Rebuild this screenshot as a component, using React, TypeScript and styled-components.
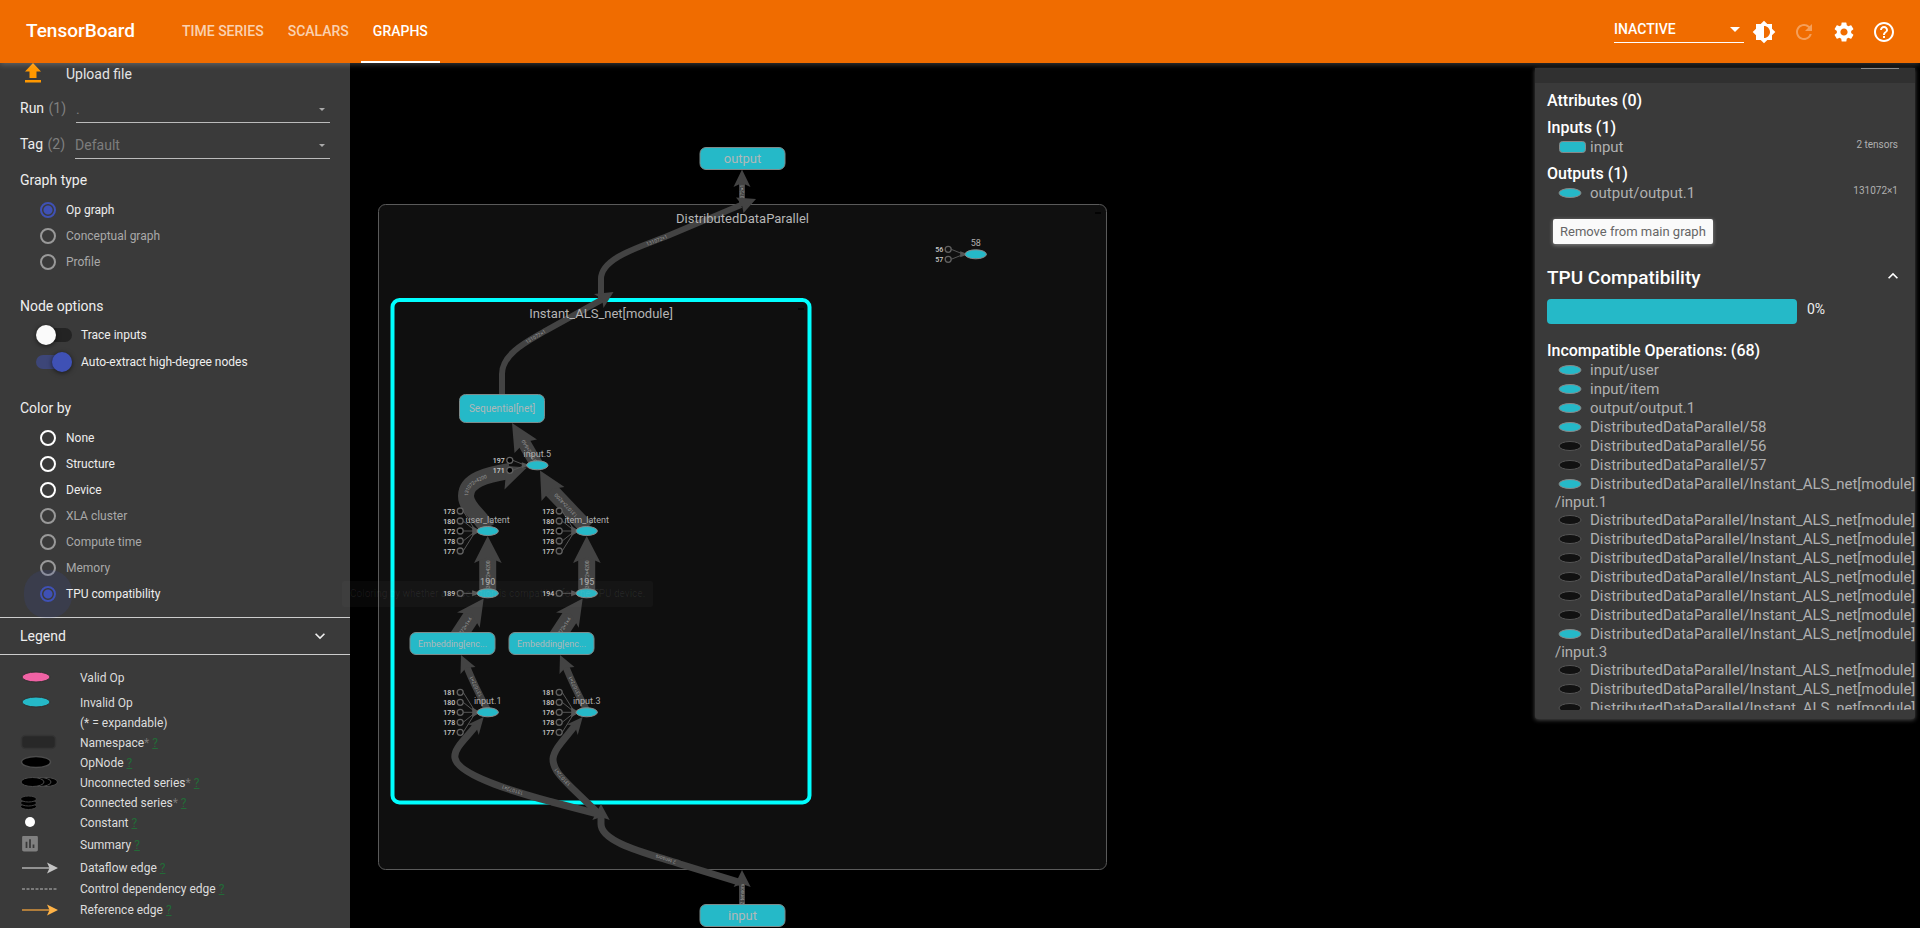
import React from "react";
import styled, { createGlobalStyle } from "styled-components";
import {
  MdBrightness6,
  MdRefresh,
  MdSettings,
  MdHelpOutline,
  MdExpandMore,
  MdExpandLess,
  MdInsertChart,
} from "react-icons/md";

const CYAN = "#25b9c8";
const SANS = 'Roboto, "Liberation Sans", sans-serif';

const GlobalStyle = createGlobalStyle`
  *, *::before, *::after { box-sizing: border-box; }
  html, body, #root { height: 100%; }
  body { margin: 0; background: #000; color: #fff; font-family: ${SANS}; overflow: hidden; }
  button, select, input { font-family: inherit; }
`;

const Page = styled.div`
  display: flex;
  flex-direction: column;
  height: 100vh;
`;

/* ---------- header ---------- */

const Header = styled.header`
  position: relative;
  z-index: 3;
  display: flex;
  align-items: stretch;
  flex: none;
  height: 63px;
  padding: 0 24px 0 26px;
  background: #f06c00;
  box-shadow: 0 1px 6px rgba(255, 255, 255, 0.25);
`;

const Brand = styled.h1`
  margin: 0 35px 0 0;
  font-size: 19px;
  font-weight: 500;
  line-height: 62px;
`;

const Tabs = styled.nav`
  display: flex;
  flex: 1;
`;

const Tab = styled.a<{ $active?: boolean }>`
  padding: 0 12px;
  border-bottom: 2px solid ${(p) => (p.$active ? "#fff" : "transparent")};
  color: ${(p) => (p.$active ? "#fff" : "rgba(255, 255, 255, 0.7)")};
  font-size: 14px;
  font-weight: 500;
  line-height: 62px;
  text-decoration: none;
`;

const HeaderTools = styled.div`
  display: flex;
  align-items: center;
  gap: 16px;
`;

const PluginPicker = styled.div`
  display: flex;
  align-items: center;
  width: 130px;
  height: 28px;
  margin: 0 -8px 6px 0;
  padding: 2px 4px 0 0;
  border-bottom: 1px solid #fff;
`;

const PluginSelect = styled.select`
  flex: 1;
  padding: 0;
  border: 0;
  background: transparent;
  color: #fff;
  font-size: 14px;
  font-weight: 500;
  appearance: none;
  outline: none;
`;

const IconButton = styled.button`
  display: flex;
  width: 24px;
  height: 24px;
  padding: 0;
  border: 0;
  background: transparent;
  color: #fff;
  &:disabled { color: rgba(255, 255, 255, 0.35); }
`;

/* ---------- body ---------- */

const Body = styled.div`
  display: flex;
  flex: 1;
  min-height: 0;
`;

const Sidebar = styled.aside`
  flex: none;
  width: 350px;
  overflow: hidden;
  background: #3a3a3a;
`;

const Controls = styled.form`
  padding: 0 20px 10px;
`;

const UploadButton = styled.button`
  display: flex;
  align-items: center;
  gap: 20px;
  height: 22px;
  margin-bottom: 2px;
  padding: 0;
  border: 0;
  background: transparent;
  color: #e4e4e4;
  font-size: 14px;
`;

const SelectRow = styled.div`
  display: flex;
  align-items: flex-end;
  height: 36px;
  gap: 10px;
`;

const SelectLabel = styled.label`
  padding-bottom: 5px;
  color: #eee;
  font-size: 14px;
  line-height: 20px;
  span { margin-left: 1px; color: #808080; }
`;

const SelectBox = styled.div`
  display: flex;
  flex: 1;
  align-items: center;
  height: 29px;
  padding: 2px 5px 0 0;
  border-bottom: 1px solid #bbb;
`;

const PlainSelect = styled.select`
  flex: 1;
  padding: 0;
  border: 0;
  background: transparent;
  color: #7d7d7d;
  font-size: 14px;
  appearance: none;
  outline: none;
`;

const Group = styled.fieldset<{ $gap: number }>`
  min-width: 0;
  margin: ${(p) => p.$gap}px 0 0;
  padding: 0;
  border: 0;
`;

const GroupTitle = styled.legend<{ $tight?: boolean }>`
  padding: 0 0 ${(p) => (p.$tight ? 5 : 7)}px;
  color: #eee;
  font-size: 14px;
  line-height: 20px;
`;

const RadioLabel = styled.label<{ $off?: boolean }>`
  display: flex;
  align-items: center;
  gap: 10px;
  height: 26px;
  padding-left: 20px;
  color: ${(p) => (p.$off ? "#a9a9a9" : "#eee")};
  font-size: 12px;
`;

const Radio = styled.input<{ $ripple?: boolean }>`
  width: 16px;
  height: 16px;
  margin: 0;
  border: 2px solid #fff;
  border-radius: 50%;
  appearance: none;
  &:disabled { border-color: #999; }
  &:checked {
    border-color: #3f51b5;
    background: radial-gradient(circle, #3f51b5 4px, transparent 5px);
    box-shadow: ${(p) => (p.$ripple ? "0 0 0 16px rgba(63, 81, 181, 0.15)" : "none")};
  }
`;

const SwitchLabel = styled.label`
  display: flex;
  align-items: center;
  gap: 9px;
  height: 27px;
  padding-left: 16px;
  color: #eee;
  font-size: 12px;
`;

const Switch = styled.input`
  display: flex;
  align-items: center;
  width: 36px;
  height: 14px;
  margin: 0;
  border-radius: 7px;
  background: #232323;
  appearance: none;
  &::before {
    content: "";
    width: 20px;
    height: 20px;
    border-radius: 50%;
    background: #fafafa;
    box-shadow: 0 1px 5px rgba(0, 0, 0, 0.6);
  }
  &:checked { justify-content: flex-end; background: #3d4678; }
  &:checked::before { background: #3f51b5; }
`;

const LegendHeader = styled.button`
  display: flex;
  align-items: center;
  justify-content: space-between;
  width: 100%;
  height: 38px;
  padding: 0 20px;
  border: solid #ccc;
  border-width: 1px 0;
  background: transparent;
  color: #eee;
  font-size: 14px;
`;

const LegendList = styled.ul`
  margin: 0;
  padding: 13px 20px 0;
  list-style: none;
`;

const LegendRow = styled.li<{ $h: number }>`
  display: flex;
  align-items: center;
  height: ${(p) => p.$h}px;
  color: #ddd;
  font-size: 12px;
  line-height: 20px;
  &:first-child { margin-bottom: 5px; }
`;

const LegendGlyph = styled.span`
  display: flex;
  flex: none;
  width: 60px;
  height: 18px;
`;

const Star = styled.span`
  color: #777;
`;

const Hint = styled.a`
  margin-left: 3px;
  color: #236b37;
`;

/* ---------- graph ---------- */

const Canvas = styled.main`
  position: relative;
  flex: 1;
  min-width: 0;
`;

const GraphSvg = styled.svg`
  display: block;
  width: 100%;
  height: 100%;
  font-family: ${SANS};
`;

const Tooltip = styled.div`
  position: absolute;
  top: 518px;
  left: -8px;
  padding: 0 8px;
  border-radius: 2px;
  background: rgba(140, 140, 140, 0.05);
  color: rgba(255, 255, 255, 0.07);
  font-size: 10px;
  line-height: 26px;
`;

/* ---------- info card ---------- */

const Card = styled.section`
  position: absolute;
  top: 5px;
  right: 5px;
  width: 380px;
  overflow: hidden;
  padding-bottom: 9px;
  border-radius: 0 0 3px 3px;
  background: #3a3a3a;
  box-shadow: 0 1px 4px rgba(255, 255, 255, 0.3);
`;

const CardTop = styled.div`
  display: flex;
  justify-content: flex-end;
  height: 15px;
  padding-right: 16px;
  background: #303030;
  &::after {
    content: "";
    width: 38px;
    height: 1px;
    background: #8a8a8a;
  }
`;

const CardBody = styled.div`
  padding: 7px 0 0 12px;
`;

const Heading = styled.h3<{ $gap?: number }>`
  margin: ${(p) => p.$gap ?? 0}px 0 0;
  font-size: 16px;
  font-weight: 500;
  line-height: 21px;
`;

const Ops = styled.ul`
  margin: 0;
  padding: 0 0 0 8px;
  list-style: none;
`;

const ClippedOps = styled(Ops)`
  height: 349px;
  overflow: hidden;
`;

const Op = styled.li`
  min-height: 19px;
  color: #b0b0b0;
  font-size: 15px;
  line-height: 18px;
  white-space: nowrap;
`;

const OpFlex = styled(Op)`
  display: flex;
  justify-content: space-between;
  padding-right: 17px;
  small { margin-top: -2px; font-size: 10px; }
`;

const OpIcon = styled.svg`
  display: inline-block;
  width: 35px;
  height: 14px;
  vertical-align: -2px;
`;

const RemoveButton = styled.button`
  display: block;
  height: 25px;
  margin: 16px 0 0 6px;
  padding: 0 7px;
  border: 0;
  border-radius: 2px;
  background: #fafafa;
  box-shadow: 0 1px 4px rgba(255, 255, 255, 0.4);
  color: #666;
  font-size: 13px;
`;

const SectionHead = styled.div`
  display: flex;
  align-items: center;
  justify-content: space-between;
  margin-top: 20px;
  padding-right: 12px;
  h2 { margin: 0; font-size: 19px; font-weight: 500; line-height: 28px; }
`;

const Meter = styled.div`
  display: flex;
  gap: 10px;
  margin-top: 7px;
  color: #eee;
  font-size: 14px;
  line-height: 20px;
`;

const MeterBar = styled.div`
  width: 250px;
  height: 25px;
  border-radius: 4px;
  background: ${CYAN};
`;

const Collapse = styled(IconButton)`
  width: 20px;
  height: 20px;
  margin-top: -4px;
`;

/* ---------- data ---------- */

const colorOptions = [
  { label: "None" },
  { label: "Structure" },
  { label: "Device" },
  { label: "XLA cluster", off: true },
  { label: "Compute time", off: true },
  { label: "Memory", off: true },
];

const M = "DistributedDataParallel/Instant_ALS_net[module]";
const ops: { name: string; on?: boolean; rest?: string }[] = [
  { name: "input/user", on: true },
  { name: "input/item", on: true },
  { name: "output/output.1", on: true },
  { name: "DistributedDataParallel/58", on: true },
  { name: "DistributedDataParallel/56" },
  { name: "DistributedDataParallel/57" },
  { name: M, on: true, rest: "/input.1" },
  ...Array.from({ length: 6 }, () => ({ name: M })),
  { name: M, on: true, rest: "/input.3" },
  ...Array.from({ length: 3 }, () => ({ name: M })),
];

const EllipseIcon = ({ on }: { on?: boolean }) => (
  <OpIcon aria-hidden="true">
    <ellipse cx="15" cy="7" rx="11" ry="4.5" fill={on ? CYAN : "#111"} stroke={on ? "#888" : "#555"} />
  </OpIcon>
);

const Caret = ({ w, color }: { w: number; color: string }) => (
  <svg width={w} height={w / 2} viewBox="0 0 10 5" aria-hidden="true">
    <path d="M0 0h10L5 5z" fill={color} />
  </svg>
);

const legend: { h: number; label: string; star?: boolean; hint?: boolean; glyph?: React.ReactNode }[] = [
  { h: 20, label: "Valid Op", glyph: <ellipse cx="16" cy="8" rx="14" ry="5" fill="#f062a4" stroke="#2e2e2e" /> },
  { h: 20, label: "Invalid Op", glyph: <ellipse cx="16" cy="8" rx="14" ry="5" fill={CYAN} stroke="#2e2e2e" /> },
  { h: 20, label: "(* = expandable)" },
  {
    h: 20, label: "Namespace", star: true, hint: true,
    glyph: <rect x="1.5" y="1.5" width="34" height="13" rx="4" fill="#282828" stroke="#343434" strokeWidth="1.5" />,
  },
  {
    h: 20, label: "OpNode", hint: true,
    glyph: <ellipse cx="16" cy="8" rx="14.5" ry="5.5" fill="#000" stroke="#4c4c4c" strokeWidth="1.5" />,
  },
  {
    h: 20, label: "Unconnected series", star: true, hint: true,
    glyph: (
      <g fill="#000" stroke="#4c4c4c">
        <ellipse cx="26" cy="8" rx="11.5" ry="4.5" />
        <ellipse cx="19.5" cy="8" rx="11.5" ry="4.5" />
        <ellipse cx="12.5" cy="8" rx="11.5" ry="4.5" />
      </g>
    ),
  },
  {
    h: 20, label: "Connected series", star: true, hint: true,
    glyph: (
      <g fill="#000" stroke="#444">
        <ellipse cx="8.5" cy="12.5" rx="8" ry="3" />
        <ellipse cx="8.5" cy="9" rx="8" ry="3" />
        <ellipse cx="8.5" cy="5" rx="8" ry="3" />
      </g>
    ),
  },
  { h: 20, label: "Constant", hint: true, glyph: <circle cx="10" cy="8" r="5" fill="#fff" /> },
  { h: 24, label: "Summary", hint: true, glyph: <MdInsertChart size={21} x="-0.5" y="-3" color="#808080" /> },
  {
    h: 21, label: "Dataflow edge", hint: true,
    glyph: (
      <g>
        <path d="M2 9H30" stroke="#b0b0b0" strokeWidth="1.5" />
        <path d="M38 9L27 3.500L29.500 9L27 14.500z" fill="#c4c4c4" />
      </g>
    ),
  },
  {
    h: 21, label: "Control dependency edge", hint: true,
    glyph: <path d="M2 9H38" stroke="#bbb" strokeDasharray="3 1.500" />,
  },
  {
    h: 21, label: "Reference edge", hint: true,
    glyph: (
      <g>
        <path d="M2 9H30" stroke="#d8953c" strokeWidth="1.5" />
        <path d="M38 9L27 3.500L29.500 9L27 14.500z" fill="#ffb347" />
      </g>
    ),
  },
];

type EdgeData = { id: string; d: string; w: number; head: string; label?: string; at?: string };

const innerEdges: EdgeData[] = [
  { id: "seq", d: "M537 465L523 441", w: 13, head: "512,423 537,439.500 525,442 514.500,453", label: "131072×640", at: "52%" },
  { id: "user", d: "M487 528C480 515 466 508 466 496C466 480 486 475 510 471", w: 16, head: "527,467.500 497,465 506,472 504.500,489.500", label: "131072×4200", at: "58%" },
  { id: "item", d: "M587 528L549 488", w: 15, head: "540,470.500 564.500,487 552,489 541.500,501", label: "131072×4200", at: "56%" },
  { id: "i1", d: "M488 711C482 700 475 687 466 665", w: 7, head: "461,655 475.500,667 466,668 460.500,674", label: "131072×1", at: "54%" },
  { id: "i3", d: "M587 711C581 700 574 687 565 665", w: 7, head: "560,655 574.500,667 565,668 559.500,674", label: "131072×1", at: "54%" },
  { id: "n190", d: "M487.700 594V556", w: 17, head: "487.700,536 501.700,563 487.700,557 474,563", label: "131072×4200", at: "48%" },
  { id: "n195", d: "M586.700 594V556", w: 17, head: "586.700,536 600.700,563 586.700,557 573,563", label: "131072×4200", at: "48%" },
  { id: "e1", d: "M452 646L473 614", w: 17, head: "483.700,598.500 457,612.500 472,614 479.700,627.700", label: "131072×1×4", at: "52%" },
  { id: "e3", d: "M551 646L572 614", w: 17, head: "582.700,598.500 556,612.500 571,614 578.700,627.700", label: "131072×1×4", at: "52%" },
  { id: "in1", d: "M598 814L552 802C530 796 458 777 455 758C453 748 468 737 477 724", w: 7, head: "483.700,717 467.700,724.500 476,726 478.700,735", label: "131072×1", at: "45%" },
  { id: "in3", d: "M599 814L572 788C560 776 553 769 553 759C554 748 567 737 576 724", w: 7, head: "582.700,717 566.700,724.500 575,726 577.700,735", label: "131072×1", at: "45%" },
  { id: "sq", d: "M502 396V374C502 353 530 340 545 331L603 299", w: 6, head: "613.500,292 594,294 602,299 603.500,308", label: "131072×1", at: "49%" },
];

const outerEdges: EdgeData[] = [
  { id: "dd", d: "M601 299V279C601 258 640 247 665 237L741 205", w: 6, head: "756,199 736,197.500 742,205 743.500,213", label: "131072×1", at: "50%" },
  { id: "bot", d: "M742 883L680 864C650 854 601 843 601 824V814", w: 7, head: "601,804 609.700,820 601,817 592.300,820", label: "2 tensors", at: "48%" },
];

const rootEdges: EdgeData[] = [
  { id: "out", d: "M742 206V182", w: 6, head: "742,169.500 750.500,187 742,183 733.500,187", label: "072×1", at: "60%" },
  { id: "inp", d: "M742 906V882", w: 6, head: "742,870 750.700,887 742,884 733.700,887", label: "2 tensors", at: "50%" },
];

const Edge = ({ id, d, w, head, label, at }: EdgeData) => (
  <g>
    <path id={"edge-" + id} d={d} fill="none" stroke="#434343" strokeWidth={w} />
    <polygon points={head} fill="#434343" />
    {label && (
      <text fontSize="5" fill="#999" dy="2" textAnchor="middle">
        <textPath href={"#edge-" + id} startOffset={at}>{label}</textPath>
      </text>
    )}
  </g>
);

type Const = [string, number, boolean?];
type OpData = { x: number; y: number; label: string; consts: Const[] };

const latentConsts: Const[] = [["173", -20], ["180", -10], ["172", 0, true], ["178", 10], ["177", 20]];

const opNodes: OpData[] = [
  { x: 537.3, y: 465.3, label: "input.5", consts: [["197", -5, true], ["171", 5, true]] },
  { x: 487.7, y: 531, label: "user_latent", consts: latentConsts },
  { x: 586.7, y: 531, label: "item_latent", consts: latentConsts },
  { x: 487.7, y: 593.3, label: "190", consts: [["189", 0]] },
  { x: 586.7, y: 593.3, label: "195", consts: [["194", 0]] },
  { x: 487.7, y: 712.3, label: "input.1", consts: [["181", -20], ["180", -10], ["179", 0], ["178", 10], ["177", 20]] },
  { x: 586.7, y: 712.3, label: "input.3", consts: [["181", -20], ["180", -10], ["176", 0], ["178", 10], ["177", 20]] },
  { x: 975.7, y: 254.3, label: "58", consts: [["56", -5], ["57", 5]] },
];

const CONST_DX = 27.5;

const OpNode = ({ x, y, label, consts }: OpData) => {
  const half = consts.length > 2 ? 5 : 3;
  return (
    <g>
      {consts.map(([name, dy, dark]) => (
        <g key={name}>
          <path d={`M${x - CONST_DX + 3} ${y + dy}L${x - 12} ${y}`} stroke="#555" />
          <circle cx={x - CONST_DX} cy={y + dy} r="3" fill={dark ? "#000" : "#111"} stroke="#606060" strokeWidth="1.3" />
          <text x={x - CONST_DX - 5} y={y + dy + 2.5} fontSize="7" fontWeight="500" fill="#ccc" textAnchor="end">{name}</text>
        </g>
      ))}
      <polygon
        points={`${x - 15.5},${y - half} ${x - 10},${y - half / 3} ${x - 10},${y + half / 3} ${x - 15.5},${y + half}`}
        fill="#555"
      />
      <ellipse cx={x} cy={y} rx="10.700" ry="4.500" fill={CYAN} stroke="#888" />
      <text x={x} y={y - 8.5} fontSize="9" fill="#b0b0b0" textAnchor="middle">{label}</text>
    </g>
  );
};

const Block = ({ x, y, h, label, size }: { x: number; y: number; h: number; label: string; size: number }) => (
  <g>
    <rect x={x} y={y} width="85" height={h} rx="6" fill={CYAN} stroke="#7d8a8a" />
    <text x={x + 42.5} y={y + h / 2 + size / 3} fontSize={size} fill="#b0b8b8" textAnchor="middle">{label}</text>
  </g>
);

const Graph = () => (
  <GraphSvg role="img" aria-label="Op graph">
    <g transform="translate(-350 -63)">
      <rect x="378.500" y="204.500" width="728" height="665" rx="7" fill="#0f0f0f" stroke="#5a5a5a" />
      <path d="M1095 213H1101" stroke="#000" strokeWidth="1.500" />
      <rect x="392.500" y="300" width="417" height="502.500" rx="7" fill="#0f0f0f" stroke="#0ff" strokeWidth="4" />
      <path d="M798 309H804" stroke="#000" strokeWidth="1.500" />
      {rootEdges.map((e) => <Edge key={e.id} {...e} />)}
      {outerEdges.map((e) => <Edge key={e.id} {...e} />)}
      {innerEdges.map((e) => <Edge key={e.id} {...e} />)}
      <text x="742.500" y="223" fontSize="13" fill="#b5b5b5" textAnchor="middle">DistributedDataParallel</text>
      <text x="601" y="318" fontSize="13" fill="#b5b5b5" textAnchor="middle">Instant_ALS_net[module]</text>
      {opNodes.map((n) => <OpNode key={n.label} {...n} />)}
      <Block x={700} y={147.5} h={22} label="output" size={13} />
      <Block x={700} y={904.5} h={22} label="input" size={13} />
      <Block x={459.5} y={394.5} h={28} label="Sequential[net]" size={10} />
      <Block x={410} y={632.5} h={22} label="Embedding[enc..." size={9} />
      <Block x={509} y={632.5} h={22} label="Embedding[enc..." size={9} />
    </g>
  </GraphSvg>
);

export default function App() {
  return (
    <Page>
      <GlobalStyle />
      <Header>
        <Brand>TensorBoard</Brand>
        <Tabs>
          <Tab href="#timeseries">TIME SERIES</Tab>
          <Tab href="#scalars">SCALARS</Tab>
          <Tab href="#graphs" $active>GRAPHS</Tab>
        </Tabs>
        <HeaderTools>
          <PluginPicker>
            <PluginSelect aria-label="Inactive plugins" defaultValue="INACTIVE">
              <option>INACTIVE</option>
            </PluginSelect>
            <Caret w={10} color="#fff" />
          </PluginPicker>
          <IconButton aria-label="Toggle theme"><MdBrightness6 size={24} /></IconButton>
          <IconButton aria-label="Reload" disabled><MdRefresh size={24} /></IconButton>
          <IconButton aria-label="Settings"><MdSettings size={24} /></IconButton>
          <IconButton aria-label="Help"><MdHelpOutline size={24} /></IconButton>
        </HeaderTools>
      </Header>
      <Body>
        <Sidebar>
          <Controls>
            <UploadButton type="button">
              <svg width="26" height="24" viewBox="0 0 26 24" aria-hidden="true">
                <path d="M13 1L21 9.500H16.500V16H9.500V9.500H5zM5 18H21V20.500H5z" fill="#ff9800" />
              </svg>
              Upload file
            </UploadButton>
            <SelectRow>
              <SelectLabel htmlFor="run">Run <span>(1)</span></SelectLabel>
              <SelectBox>
                <PlainSelect id="run" defaultValue="."><option>.</option></PlainSelect>
                <Caret w={6} color="#aaa" />
              </SelectBox>
            </SelectRow>
            <SelectRow>
              <SelectLabel htmlFor="tag">Tag <span>(2)</span></SelectLabel>
              <SelectBox>
                <PlainSelect id="tag" defaultValue="Default"><option>Default</option></PlainSelect>
                <Caret w={6} color="#aaa" />
              </SelectBox>
            </SelectRow>
            <Group $gap={11}>
              <GroupTitle>Graph type</GroupTitle>
              <RadioLabel><Radio type="radio" name="type" defaultChecked />Op graph</RadioLabel>
              <RadioLabel $off><Radio type="radio" name="type" disabled />Conceptual graph</RadioLabel>
              <RadioLabel $off><Radio type="radio" name="type" disabled />Profile</RadioLabel>
            </Group>
            <Group $gap={21}>
              <GroupTitle $tight>Node options</GroupTitle>
              <SwitchLabel><Switch type="checkbox" />Trace inputs</SwitchLabel>
              <SwitchLabel><Switch type="checkbox" defaultChecked />Auto-extract high-degree nodes</SwitchLabel>
            </Group>
            <Group $gap={23}>
              <GroupTitle>Color by</GroupTitle>
              {colorOptions.map((o) => (
                <RadioLabel key={o.label} $off={o.off}>
                  <Radio type="radio" name="color" disabled={o.off} />
                  {o.label}
                </RadioLabel>
              ))}
              <RadioLabel><Radio type="radio" name="color" defaultChecked $ripple />TPU compatibility</RadioLabel>
            </Group>
          </Controls>
          <LegendHeader type="button">Legend<MdExpandMore size={20} /></LegendHeader>
          <LegendList>
            {legend.map((l) => (
              <LegendRow key={l.label} $h={l.h}>
                <LegendGlyph>{l.glyph && <svg width="40" height="18" aria-hidden="true">{l.glyph}</svg>}</LegendGlyph>
                {l.label}
                {l.star && <Star>*</Star>}
                {l.hint && <Hint href="#help">?</Hint>}
              </LegendRow>
            ))}
          </LegendList>
        </Sidebar>
        <Canvas>
          <Graph />
          <Tooltip role="tooltip">Coloring by whether an operation is compatible for the TPU device.</Tooltip>
          <Card>
            <CardTop />
            <CardBody>
              <Heading>Attributes (0)</Heading>
              <Heading $gap={6}>Inputs (1)</Heading>
              <Ops>
                <OpFlex>
                  <span>
                    <OpIcon aria-hidden="true">
                      <rect x="4.500" y="1.500" width="26" height="11" rx="3" fill={CYAN} stroke="#888" />
                    </OpIcon>
                    input
                  </span>
                  <small>2 tensors</small>
                </OpFlex>
              </Ops>
              <Heading $gap={6}>Outputs (1)</Heading>
              <Ops>
                <OpFlex>
                  <span><EllipseIcon on />output/output.1</span>
                  <small>131072×1</small>
                </OpFlex>
              </Ops>
              <RemoveButton>Remove from main graph</RemoveButton>
              <SectionHead>
                <h2>TPU Compatibility</h2>
                <Collapse aria-label="Collapse"><MdExpandLess size={20} /></Collapse>
              </SectionHead>
              <Meter><MeterBar />0%</Meter>
              <Heading $gap={16}>Incompatible Operations: (68)</Heading>
              <ClippedOps>
                {ops.map((o, i) => (
                  <Op key={i}>
                    <EllipseIcon on={o.on} />
                    {o.name}
                    {o.rest && <><br />{o.rest}</>}
                  </Op>
                ))}
              </ClippedOps>
            </CardBody>
          </Card>
        </Canvas>
      </Body>
    </Page>
  );
}
